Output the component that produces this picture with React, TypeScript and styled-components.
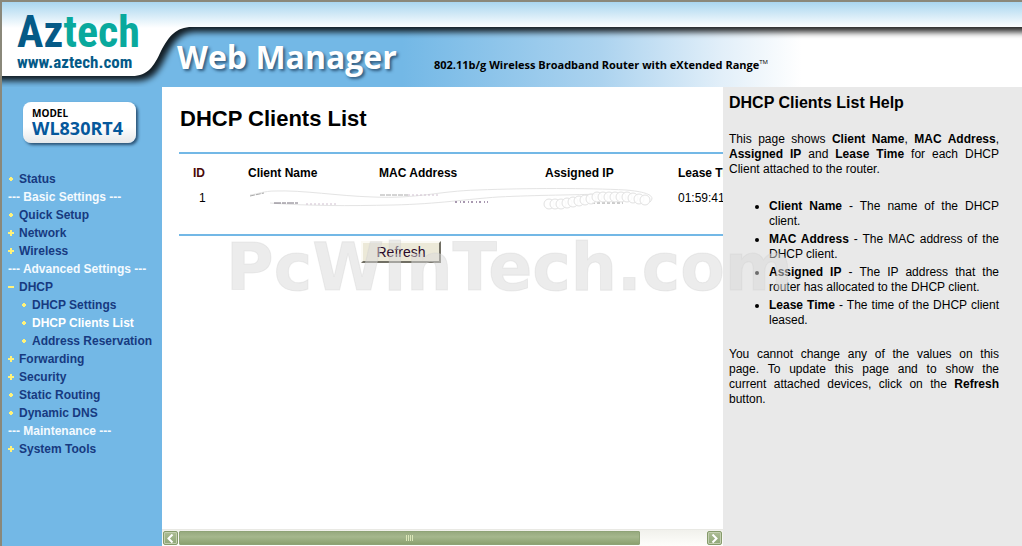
import React from "react";
import styled, { createGlobalStyle, css } from "styled-components";

const SKY = "#73b8e6";

const GlobalStyle = createGlobalStyle`
  * { box-sizing: border-box; }
  html, body { margin: 0; padding: 0; }
  body {
    font-family: "Liberation Sans", Arial, sans-serif;
    font-size: 12px;
    line-height: 15px;
    color: #000;
    background: #fff;
  }
`;

const Page = styled.div`
  display: flex;
  flex-direction: column;
  min-height: 100vh;
  border-top: 2px solid #8a887a;
  border-left: 2px solid #8a887a;
  position: relative;
  overflow: hidden;
`;

const Banner = styled.header`
  position: relative;
  display: flex;
  height: 85px;
  overflow: hidden;
`;

const BannerArt = styled.svg`
  position: absolute;
  inset: 0;
  width: 100%;
  height: 100%;
`;

const Brand = styled.a`
  position: relative;
  width: 175px;
  padding: 8px 0 0 15px;
  text-decoration: none;
  font-family: "Liberation Sans Narrow", "Roboto Condensed", "Open Sans Condensed", "Liberation Sans", sans-serif;
  font-weight: 700;
  white-space: nowrap;
`;

const BrandName = styled.span`
  display: block;
  font-size: 44px;
  line-height: 44px;
  color: #09a99d;
`;

const BrandInitials = styled.span`
  color: #045a87;
`;

const BrandSite = styled.span`
  display: block;
  font-size: 17px;
  line-height: 16px;
  color: #045a87;
`;

const ProductName = styled.div`
  position: relative;
  width: 257px;
  padding-top: 33px;
  font: 700 32px/44px "Open Sans", sans-serif;
  color: #fff;
  white-space: nowrap;
  text-shadow: 2px 2px 3px rgba(20, 50, 80, 0.7);
`;

const Tagline = styled.div`
  position: relative;
  padding-top: 55px;
  font: 700 11px/16px "Open Sans", sans-serif;
  white-space: nowrap;
`;

const Trademark = styled.sup`
  font-size: 6px;
  font-weight: 400;
  line-height: 6px;
`;

const Body = styled.div`
  display: flex;
  flex: 1;
`;

const Sidebar = styled.nav`
  flex: 0 0 160px;
  background: ${SKY};
`;

const ModelBadge = styled.div`
  width: 113px;
  height: 41px;
  margin: 15px 0 27px 21px;
  padding: 5px 9px;
  border-radius: 8px;
  background: linear-gradient(#fff 60%, #e6e8ea);
  box-shadow: 2px 2px 3px rgba(20, 50, 80, 0.75);
  font-family: "Open Sans", sans-serif;
  font-weight: 700;
  white-space: nowrap;
`;

const ModelLabel = styled.div`
  font-size: 10px;
  line-height: 12px;
`;

const ModelNumber = styled.div`
  font-size: 18px;
  line-height: 18px;
  color: #05589c;
`;

const Menu = styled.ul`
  margin: 0;
  padding: 0 0 0 6px;
  list-style: none;
  font-weight: 700;
  line-height: 18px;
  white-space: nowrap;
`;

const MenuRow = styled.li<{ $nested?: boolean }>`
  display: flex;
  align-items: center;
  height: 18px;
  padding-left: ${(p) => (p.$nested ? 13 : 0)}px;
`;

const MenuHeading = styled.li`
  height: 18px;
  color: #f4fafe;
`;

const Marker = styled.svg`
  flex: none;
  width: 6px;
  height: 6px;
  margin-right: 5px;
`;

const MenuLink = styled.a<{ $active?: boolean }>`
  color: ${(p) => (p.$active ? "#fff" : "#173a80")};
  text-decoration: none;
`;

const Main = styled.main`
  display: flex;
  flex: 1;
  flex-direction: column;
  min-width: 0;
  overflow: hidden;
  background: #fff;
`;

const Content = styled.div`
  flex: 1;
  padding: 18px 0 0 17px;
`;

const Title = styled.h1`
  margin: 0 0 20px 1px;
  font-size: 22px;
  line-height: 27px;
  font-weight: 700;
`;

const TableFrame = styled.div`
  height: 84px;
  padding-top: 7px;
  border-top: 2px solid ${SKY};
  border-bottom: 2px solid ${SKY};
`;

const ClientTable = styled.table`
  width: 620px;
  table-layout: fixed;
  border-collapse: collapse;
`;

const cell = css`
  height: 25px;
  padding: 0;
  text-align: left;
  white-space: nowrap;
`;

const HeadCell = styled.th<{ $width: number; $first?: boolean }>`
  ${cell}
  width: ${(p) => p.$width}px;
  padding-left: ${(p) => (p.$first ? 14 : 0)}px;
  color: ${(p) => (p.$first ? "#4a0808" : "#000")};
`;

const Cell = styled.td<{ $first?: boolean }>`
  ${cell}
  position: relative;
  padding-left: ${(p) => (p.$first ? 20 : 0)}px;
`;

const Scribble = styled.svg`
  position: absolute;
  left: 0;
  top: 0;
  width: 410px;
  height: 26px;
`;

const RefreshButton = styled.button`
  display: block;
  width: 80px;
  height: 22px;
  margin: 5px 0 0 182px;
  padding: 0;
  border: 2px solid;
  border-color: #fbfaf4 #716f64 #716f64 #fbfaf4;
  background: #ece9d8;
  color: #2a0a2a;
  font: 14px/18px "Liberation Sans", Arial, sans-serif;
`;

const ScrollBar = styled.div`
  display: flex;
  gap: 1px;
  height: 17px;
  padding: 1px;
  border-top: 1px solid #e9e9e4;
  background: linear-gradient(#f1f1ec, #fefefb);
`;

const ScrollButton = styled.button`
  display: flex;
  flex: 0 0 15px;
  align-items: center;
  justify-content: center;
  padding: 0;
  border: 1px solid #869b6b;
  border-radius: 2px;
  background: linear-gradient(#adbd95, #8fa777);
  box-shadow: inset 0 0 0 1px #c3cfb0;
`;

const ScrollTrack = styled.div`
  flex: 1;
  padding-right: 66px;
`;

const ScrollThumb = styled.div`
  display: flex;
  align-items: center;
  justify-content: center;
  gap: 1px;
  height: 14px;
  border: 1px solid #8fa377;
  border-radius: 1px;
  background: linear-gradient(#97aa7f, #a5b78d 40%, #8ba16f);
`;

const Grip = styled.i`
  width: 1px;
  height: 6px;
  background: #dbe6b8;
`;

const Help = styled.aside`
  flex: 0 0 299px;
  padding: 6px 23px 20px 6px;
  background: #e9e9e9;
  text-align: justify;
`;

const HelpTitle = styled.h2`
  margin: 0 0 20px;
  font-size: 16px;
  line-height: 19px;
  text-align: left;
`;

const HelpText = styled.p`
  margin: 0;
`;

const FullLine = styled.span`
  display: block;
  text-align-last: justify;
`;

const HelpList = styled.ul`
  margin: 22px 0 19px;
  padding: 0 0 0 40px;
`;

const HelpItem = styled.li`
  margin-bottom: 3px;
`;

const Watermark = styled.div`
  position: absolute;
  left: 224px;
  top: 228px;
  font: 700 65px/76px "DejaVu Sans", Verdana, sans-serif;
  color: rgba(217, 217, 217, 0.5);
  -webkit-text-stroke: 1px rgba(205, 205, 205, 0.3);
  pointer-events: none;
  white-space: nowrap;
`;

type MarkerKind = "dot" | "plus" | "minus";

const markerPaths: Record<MarkerKind, string> = {
  dot: "M2 1h2v1h1v2H4v1H2V4H1V2h1z",
  plus: "M2 0h2v2h2v2H4v2H2V4H0V2h2z",
  minus: "M0 2h6v2H0z",
};

type MenuEntry = { text: string; marker?: MarkerKind; nested?: boolean; active?: boolean };

const menu: MenuEntry[] = [
  { text: "Status", marker: "dot" },
  { text: "--- Basic Settings ---" },
  { text: "Quick Setup", marker: "dot" },
  { text: "Network", marker: "plus" },
  { text: "Wireless", marker: "plus" },
  { text: "--- Advanced Settings ---" },
  { text: "DHCP", marker: "minus" },
  { text: "DHCP Settings", marker: "dot", nested: true },
  { text: "DHCP Clients List", marker: "dot", nested: true, active: true },
  { text: "Address Reservation", marker: "dot", nested: true },
  { text: "Forwarding", marker: "plus" },
  { text: "Security", marker: "plus" },
  { text: "Static Routing", marker: "dot" },
  { text: "Dynamic DNS", marker: "dot" },
  { text: "--- Maintenance ---" },
  { text: "System Tools", marker: "plus" },
];

const helpItems = [
  ["Client Name", "The name of the DHCP client."],
  ["MAC Address", "The MAC address of the DHCP client."],
  ["Assigned IP", "The IP address that the router has allocated to the DHCP client."],
  ["Lease Time", "The time of the DHCP client leased."],
];

function BannerBackground() {
  return (
    <BannerArt aria-hidden="true">
      <defs>
        <linearGradient id="sky" gradientUnits="userSpaceOnUse" x1="400" y1="0" x2="800" y2="0">
          <stop offset="0" stopColor={SKY} />
          <stop offset="0.5" stopColor="#acd3ef" />
          <stop offset="0.8" stopColor="#e2eff9" />
          <stop offset="1" stopColor="#fff" />
        </linearGradient>
        <linearGradient id="top" gradientUnits="userSpaceOnUse" x1="0" y1="0" x2="0" y2="26">
          <stop offset="0" stopColor="#a9d6ef" />
          <stop offset="1" stopColor="#fff" />
        </linearGradient>
        <filter id="soft" filterUnits="userSpaceOnUse" x="-20" y="-20" width="4040" height="130">
          <feGaussianBlur stdDeviation="3" />
        </filter>
      </defs>
      <rect width="4000" height="85" fill="url(#sky)" />
      <path
        d="M-20-20H4020V30H193C179 30 172 39 164 54C157 69 151 79 134 79H-20Z"
        fill="#000"
        fillOpacity="0.85"
        filter="url(#soft)"
      />
      <path d="M0 0H4000V25H190C174 25 167 34 159 49C152 64 146 74 130 74H0Z" fill="url(#top)" />
    </BannerArt>
  );
}

function ErasedValues() {
  const loops = Array.from({ length: 17 }, (_, i) => i);
  return (
    <Scribble viewBox="0 0 410 26" aria-hidden="true" fill="none">
      <path d="M2 9C10 8 16 5 27 5C55 4 90 10 125 11C170 13 190 5 230 4C280 2 340 2 378 4C400 6 408 10 402 16" stroke="#e4e4e4" />
      <path d="M22 17C60 20 100 20 145 19C190 18 220 13 250 11C290 9 330 9 350 8" stroke="#e4e4e4" />
      <path d="M2 10L16 7M132 9H160" stroke="#aaa" strokeDasharray="5 1" />
      <path d="M160 9H190M58 18H90" stroke="#d0c0d0" strokeDasharray="2 2" />
      <path d="M26 17H50" stroke="#77717c" strokeDasharray="7 1 4 1" />
      <path d="M207 16H240" stroke="#a898b0" strokeWidth="2" strokeDasharray="2 3 1 2" />
      <path d="M344 17H375" stroke="#999" strokeDasharray="3 2" />
      {loops.map((i) => (
        <circle
          key={i}
          cx={301 + i * 6}
          cy={i < 3 ? 18 : i < 8 ? 20 - i : 11 + Math.max(0, i - 13)}
          r="5"
          fill="#fff"
          fillOpacity="0.8"
          stroke="#e2e2e2"
        />
      ))}
    </Scribble>
  );
}

export default function App() {
  return (
    <>
      <GlobalStyle />
      <Page>
        <Banner>
          <BannerBackground />
          <Brand href="#home">
            <BrandName>
              <BrandInitials>Az</BrandInitials>tech
            </BrandName>
            <BrandSite>www.aztech.com</BrandSite>
          </Brand>
          <ProductName>Web Manager</ProductName>
          <Tagline>
            802.11b/g Wireless Broadband Router with eXtended Range<Trademark>TM</Trademark>
          </Tagline>
        </Banner>
        <Body>
          <Sidebar>
            <ModelBadge>
              <ModelLabel>MODEL</ModelLabel>
              <ModelNumber>WL830RT4</ModelNumber>
            </ModelBadge>
            <Menu>
              {menu.map((m) =>
                m.marker ? (
                  <MenuRow key={m.text} $nested={m.nested}>
                    <Marker viewBox="0 0 6 6" shapeRendering="crispEdges" aria-hidden="true">
                      <path d={markerPaths[m.marker]} fill="#fff27a" />
                    </Marker>
                    <MenuLink href="#menu" $active={m.active}>
                      {m.text}
                    </MenuLink>
                  </MenuRow>
                ) : (
                  <MenuHeading key={m.text}>{m.text}</MenuHeading>
                )
              )}
            </Menu>
          </Sidebar>
          <Main>
            <Content>
              <Title>DHCP Clients List</Title>
              <TableFrame>
                <ClientTable>
                  <thead>
                    <tr>
                      <HeadCell $width={69} $first>ID</HeadCell>
                      <HeadCell $width={131}>Client Name</HeadCell>
                      <HeadCell $width={166}>MAC Address</HeadCell>
                      <HeadCell $width={133}>Assigned IP</HeadCell>
                      <HeadCell $width={121}>Lease Time</HeadCell>
                    </tr>
                  </thead>
                  <tbody>
                    <tr>
                      <Cell $first>1</Cell>
                      <Cell>
                        <ErasedValues />
                      </Cell>
                      <Cell />
                      <Cell />
                      <Cell>01:59:41</Cell>
                    </tr>
                  </tbody>
                </ClientTable>
              </TableFrame>
              <RefreshButton type="button">Refresh</RefreshButton>
            </Content>
            <ScrollBar>
              <ScrollButton type="button" aria-label="Scroll left">
                <svg width="7" height="9" viewBox="0 0 7 9" fill="none" stroke="#fff" strokeWidth="2">
                  <path d="M5.500 .5L1.500 4.500L5.500 8.500" />
                </svg>
              </ScrollButton>
              <ScrollTrack>
                <ScrollThumb>
                  <Grip />
                  <Grip />
                  <Grip />
                  <Grip />
                </ScrollThumb>
              </ScrollTrack>
              <ScrollButton type="button" aria-label="Scroll right">
                <svg width="7" height="9" viewBox="0 0 7 9" fill="none" stroke="#fff" strokeWidth="2">
                  <path d="M1.500 .5L5.500 4.500L1.500 8.500" />
                </svg>
              </ScrollButton>
            </ScrollBar>
          </Main>
          <Help>
            <HelpTitle>DHCP Clients List Help</HelpTitle>
            <HelpText>
              This page shows <b>Client Name</b>, <b>MAC Address</b>, <b>Assigned IP</b> and <b>Lease Time</b> for
              each DHCP Client attached to the router.
            </HelpText>
            <HelpList>
              {helpItems.map(([name, text]) => (
                <HelpItem key={name}>
                  <b>{name}</b> - {text}
                </HelpItem>
              ))}
            </HelpList>
            <HelpText>
              <FullLine>You cannot change any of the values on this </FullLine>
              <FullLine>page. To update this page and to show the </FullLine>
              <FullLine>
                current attached devices, click on the <b>Refresh</b>{" "}
              </FullLine>
              button.
            </HelpText>
          </Help>
        </Body>
        <Watermark aria-hidden="true">PcWinTech.com</Watermark>
      </Page>
    </>
  );
}
